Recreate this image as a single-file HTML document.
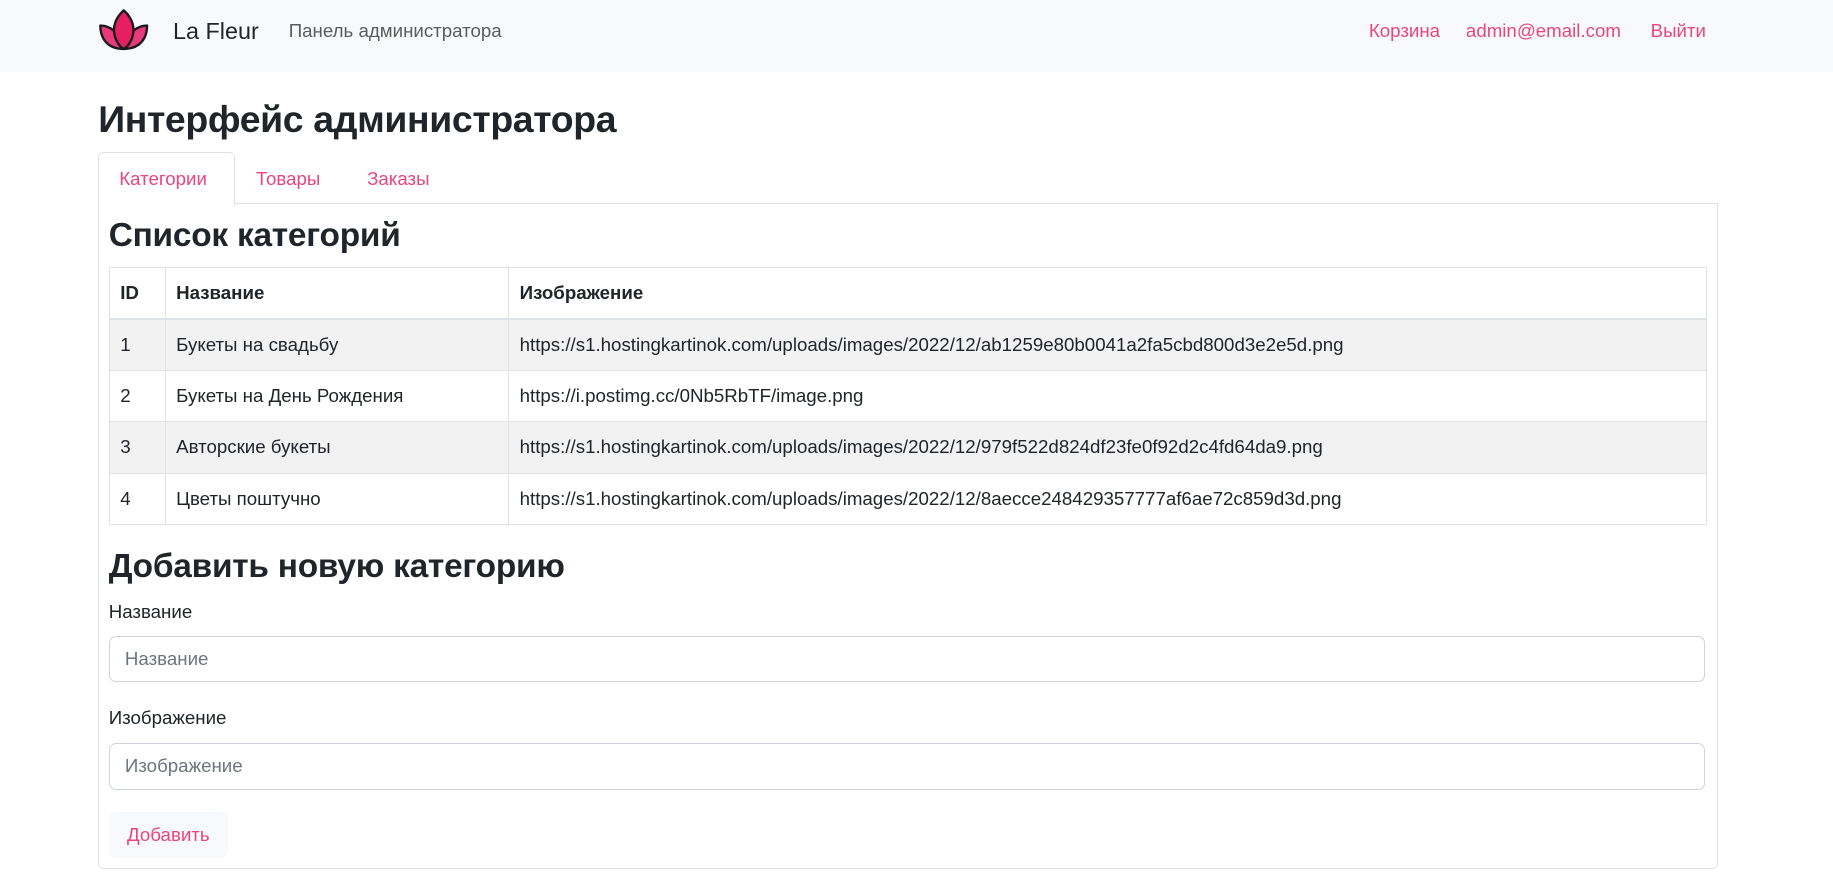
<!DOCTYPE html>
<html><head><meta charset="utf-8"><style>
html,body{margin:0;padding:0;background:#fff}
body{zoom:1.169;width:1568px;height:760px;position:relative;overflow:hidden;font-family:"Segoe UI","Liberation Sans","DejaVu Sans",sans-serif;color:#212529;font-size:16px}
.a{position:absolute;white-space:nowrap}
.nav{position:absolute;left:0;top:0;width:1568px;height:62px;background:#f8f9fa}
.pink{color:#e8467f}
table{position:absolute;left:93px;top:228px;width:1367px;border-collapse:collapse;font-size:16px}
td,th{border:1px solid #dee2e6;height:43px;padding:0 9px;text-align:left}
th{font-weight:700;border-bottom:2px solid #dee2e6}
tr.s td{background:#f2f2f2}
.inp{position:absolute;left:93px;width:1364px;height:38px;border:1px solid #ced4da;border-radius:6px;color:#6c757d;line-height:38px;box-sizing:content-box;text-indent:13px}
</style></head><body>
<div class="nav">
<svg class="a" style="left:84px;top:7px" width="44" height="37" viewBox="0 0 44 37">
<g stroke="#1a1a1a" stroke-width="2" fill="#e83a78" stroke-linejoin="round">
<path d="M22 35 C8 35 2 26 2 15 C10 15 18 20 22 35Z"/>
<path d="M22 35 C36 35 42 26 42 15 C34 15 26 20 22 35Z"/>
<path d="M22 2 C14 9 12 18 15 26 C17 31 20 34 22 35 C24 34 27 31 29 26 C32 18 30 9 22 2Z" fill="#e61e62"/>
</g></svg>
<div class="a" style="left:148px;top:15px;font-size:20px">La Fleur</div>
<div class="a" style="left:247px;top:17px;color:#595c5f">Панель администратора</div>
<div class="a pink" style="left:1171px;top:17px">Корзина</div>
<div class="a pink" style="left:1254px;top:17px">admin@email.com</div>
<div class="a pink" style="left:1412px;top:17px">Выйти</div>
</div>
<div class="a" style="left:84px;top:84px;font-size:32px;font-weight:700;letter-spacing:-0.3px">Интерфейс администратора</div>
<div class="a" style="left:84px;top:130px;width:115px;height:45px;border:1px solid #dee2e6;border-bottom:none;border-radius:5px 5px 0 0;background:#fff;z-index:2"></div>
<div class="a" style="left:84px;top:174px;width:1384px;height:568px;border:1px solid #dee2e6;border-radius:0 0 5px 5px"></div>
<div class="a pink" style="left:102px;top:144px;z-index:3">Категории</div>
<div class="a pink" style="left:219px;top:144px">Товары</div>
<div class="a pink" style="left:314px;top:144px">Заказы</div>
<div class="a" style="left:93px;top:186px;font-size:28.6px;font-weight:700;letter-spacing:-0.2px">Список категорий</div>
<table>
<tr><th style="width:29px">ID</th><th style="width:275px">Название</th><th>Изображение</th></tr>
<tr class="s"><td>1</td><td>Букеты на свадьбу</td><td>https://s1.hostingkartinok.com/uploads/images/2022/12/ab1259e80b0041a2fa5cbd800d3e2e5d.png</td></tr>
<tr><td>2</td><td>Букеты на День Рождения</td><td>https://i.postimg.cc/0Nb5RbTF/image.png</td></tr>
<tr class="s"><td>3</td><td>Авторские букеты</td><td>https://s1.hostingkartinok.com/uploads/images/2022/12/979f522d824df23fe0f92d2c4fd64da9.png</td></tr>
<tr><td>4</td><td>Цветы поштучно</td><td>https://s1.hostingkartinok.com/uploads/images/2022/12/8aecce248429357777af6ae72c859d3d.png</td></tr>
</table>
<div class="a" style="left:93px;top:469px;font-size:28.6px;font-weight:700;letter-spacing:-0.2px">Добавить новую категорию</div>
<div class="a" style="left:93px;top:514px">Название</div>
<div class="inp" style="top:544px">Название</div>
<div class="a" style="left:93px;top:605px">Изображение</div>
<div class="inp" style="top:636px">Изображение</div>
<div class="a pink" style="left:93px;top:695px;width:102px;height:39px;line-height:39px;text-align:center;background:#f8f9fa;border-radius:6px">Добавить</div>
</body></html>
